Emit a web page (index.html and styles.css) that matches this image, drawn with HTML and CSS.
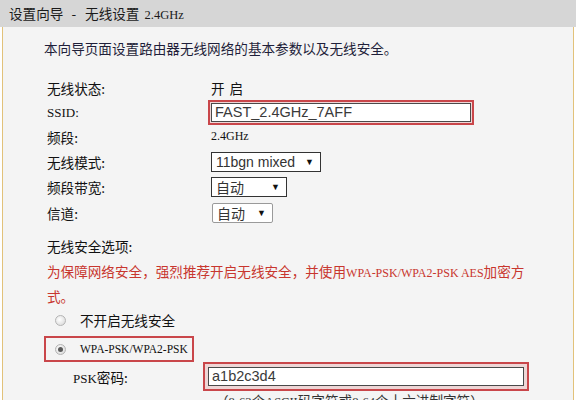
FILE: index.html
```html
<!DOCTYPE html>
<html lang="zh-CN">
<head>
  <meta charset="UTF-8">
  <title>设置向导 - 无线设置 2.4GHz</title>
  <link rel="stylesheet" href="styles.css">
</head>
<body>
  <div class="panel">
    <div class="panel-title">设置向导<span class="dash">-</span>无线设置 <span class="latin">2.4GHz</span></div>
    <div class="panel-body">
      <p class="intro">本向导页面设置路由器无线网络的基本参数以及无线安全。</p>

      <div class="form">
        <div class="row r1">
          <span class="label">无线状态:</span>
          <span class="value spaced">开启</span>
        </div>
        <div class="row r2">
          <span class="label latin">SSID:</span>
          <span class="hl hl-ssid"><span class="field">FAST_2.4GHz_7AFF</span></span>
        </div>
        <div class="row r3">
          <span class="label">频段:</span>
          <span class="value latin small">2.4GHz</span>
        </div>
        <div class="row r4">
          <span class="label">无线模式:</span>
          <span class="select sel-mode">11bgn mixed<i>▼</i></span>
        </div>
        <div class="row r5">
          <span class="label">频段带宽:</span>
          <span class="select sel-band">自动<i>▼</i></span>
        </div>
        <div class="row r6">
          <span class="label">信道:</span>
          <span class="select sel-chan">自动<i>▼</i></span>
        </div>
      </div>

      <div class="section-title">无线安全选项:</div>
      <p class="warn">为保障网络安全，强烈推荐开启无线安全，并使用<span class="latin">WPA-PSK/WPA2-PSK AES</span>加密方式。</p>

      <div class="option opt-off">
        <span class="radio"></span>
        <span>不开启无线安全</span>
      </div>
      <div class="option opt-wpa">
        <span class="hl-opt">
          <span class="radio checked"></span>
          <span class="latin">WPA-PSK/WPA2-PSK</span>
        </span>
      </div>
      <div class="psk-row">
        <span class="label"><span class="latin">PSK</span>密码:</span>
        <span class="hl hl-psk"><span class="field">a1b2c3d4</span></span>
      </div>
      <div class="hint">（<span class="latin">8-63</span>个<span class="latin">ASCII</span>码字符或<span class="latin">8-64</span>个十六进制字符）</div>
    </div>
  </div>
</body>
</html>
```

FILE: styles.css
```css
body {
  margin: 0;
  background: #ffffff;
  font-family: "Noto Sans CJK SC", "Noto Sans", sans-serif;
  font-size: 13.6px;
  color: #111;
  overflow: hidden;
}

.latin {
  font-family: "Liberation Serif", "Noto Sans CJK SC", serif;
  font-size: 13px;
}

.panel {
  width: 576px;
}

.panel-title {
  height: 27px;
  line-height: 26px;
  background: #d6d6d6;
  padding-left: 9px;
  color: #1a1a1a;
}

.panel-title .dash {
  margin: 0 9px 0 8px;
}

.panel-title .latin {
  margin-left: 2px;
  font-size: 12.5px;
}

.panel-body {
  margin-left: 2px;
  width: 572px;
  height: 380px;
  border-left: 1px solid #e2c27a;
  border-right: 1px solid #e2c27a;
  background: #f4f4f4;
  padding-left: 41px;
  box-sizing: border-box;
}

.intro {
  margin: 0;
  height: 49px;
  line-height: 42px;
  color: #1f1f3a;
}

.form {
  display: flex;
  flex-direction: column;
}

.row {
  display: grid;
  grid-template-columns: 164px 1fr;
  align-items: center;
  padding-left: 3px;
}

.r1 { height: 24px; }
.r2 { height: 24px; }
.r3 { height: 25px; }
.r4 { height: 25px; }
.r5 { height: 25px; }
.r6 { height: 28px; }

.spaced {
  letter-spacing: 5px;
}

.value.small {
  font-size: 12px;
}

.hl {
  display: inline-flex;
  border: 2px solid #c9464a;
  padding: 1px;
  background: #eed6d6;
  box-sizing: border-box;
  margin-left: -3px;
}

.hl-ssid {
  width: 266px;
  height: 25px;
}

.field {
  flex: 1;
  background: #fff;
  border: 1px solid #4a4a4a;
  font-family: "Liberation Sans", Arial, sans-serif;
  font-size: 14.5px;
  line-height: 17px;
  padding-left: 3px;
  color: #3a3a3a;
}

.select {
  display: inline-flex;
  align-items: center;
  justify-content: space-between;
  box-sizing: border-box;
  height: 20px;
  border: 1px solid #333;
  background: #fff;
  padding: 0 6px 0 4px;
  font-family: "Liberation Sans", "Noto Sans CJK SC", sans-serif;
  font-size: 14px;
  color: #333;
}

.select i {
  font-style: normal;
  font-size: 9px;
  color: #111;
}

.sel-mode { width: 110px; }
.sel-band { width: 76px; }
.sel-chan {
  width: 61px;
  border-color: #9a9a9a;
  border-radius: 2px;
  margin-left: 1px;
}

.section-title {
  height: 31px;
  line-height: 38px;
  padding-left: 3px;
}

.warn {
  margin: 0;
  padding: 2px 0 0 3px;
  width: 488px;
  height: 46px;
  line-height: 23px;
  color: #c8362e;
}

.warn .latin {
  font-size: 12px;
}

.option {
  display: flex;
  align-items: center;
  height: 28px;
  gap: 14px;
  padding-left: 11px;
}

.radio {
  flex: none;
  width: 11px;
  height: 11px;
  border-radius: 50%;
  border: 1px solid #b4b4b4;
  background: radial-gradient(circle at 40% 40%, #ffffff, #d4d4d4);
  box-sizing: border-box;
  position: relative;
}

.radio.checked::after {
  content: "";
  position: absolute;
  left: 2px;
  top: 2px;
  width: 5px;
  height: 5px;
  border-radius: 50%;
  background: #5a5a5a;
}

.opt-wpa {
  align-items: flex-end;
}

.hl-opt {
  display: flex;
  align-items: center;
  gap: 14px;
  margin-left: -11px;
  padding: 0 0 0 9px;
  width: 150px;
  height: 26px;
  border: 2px solid #c9464a;
  box-sizing: border-box;
}

.hl-opt .latin {
  font-size: 11.5px;
}

.psk-row {
  display: grid;
  grid-template-columns: 133px 1fr;
  align-items: center;
  height: 29px;
  padding-left: 29px;
}

.hl-psk {
  width: 326px;
  height: 29px;
  padding: 3px;
}

.hint {
  padding-left: 171px;
  line-height: 16px;
  margin-top: 1px;
  color: #333;
}

.hint .latin {
  font-size: 12.5px;
}
```
